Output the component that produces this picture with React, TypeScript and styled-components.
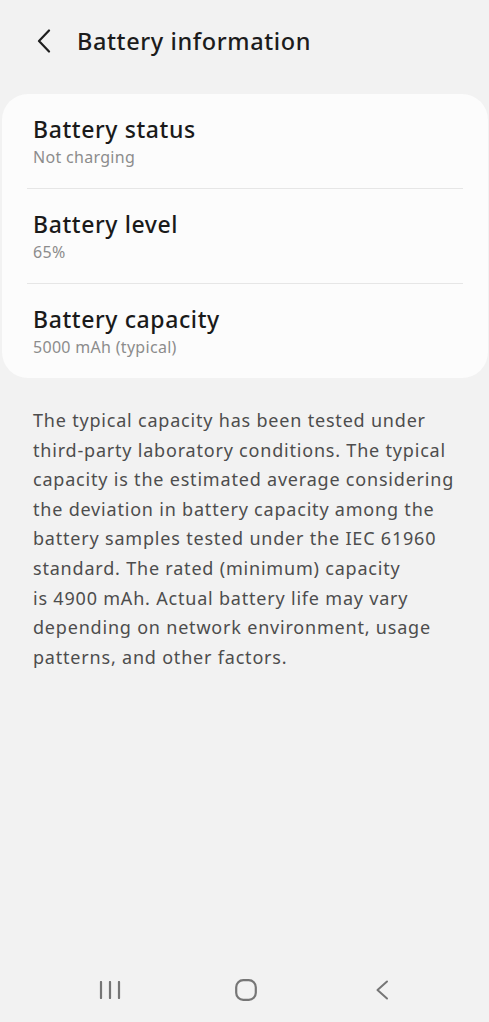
import React from "react";
import styled, { createGlobalStyle } from "styled-components";

const Global = createGlobalStyle`
  html, body { margin: 0; padding: 0; background: #f2f2f2; }
  body { font-family: "Noto Sans", "DejaVu Sans", sans-serif; -webkit-font-smoothing: antialiased; }
  * { box-sizing: border-box; }
`;

const Screen = styled.div`
  min-height: 100vh;
  height: 1022px;
  display: flex;
  flex-direction: column;
  background: #f2f2f2;
`;

const Header = styled.header`
  height: 94px;
  display: flex;
  align-items: flex-start;
  padding: 23px 0 0 30px;
`;

const BackButton = styled.button`
  width: 28px;
  height: 36px;
  border: 0;
  padding: 0;
  background: transparent;
  display: flex;
  align-items: center;
  justify-content: center;
  margin-right: 19px;
  color: #1f1f1f;
`;

const Title = styled.h1`
  margin: 0;
  font-size: 23.5px;
  line-height: 36px;
  font-weight: 500;
  color: #1c1c1c;
  letter-spacing: 0.6px;
`;

const Card = styled.section`
  margin: 0 1px 0 2px;
  background: #fcfcfc;
  border-radius: 26px;
  padding: 0 25px;
`;

const Item = styled.div<{ $last?: boolean }>`
  height: ${(p) => (p.$last ? 94 : 95)}px;
  padding: 18px 0 0 6px;
  border-bottom: ${(p) => (p.$last ? "none" : "1px solid #e6e6e6")};
`;

const ItemTitle = styled.div`
  font-size: 23px;
  line-height: 34px;
  color: #1a1a1a;
  font-weight: 500;
  letter-spacing: 0.6px;
`;

const ItemSub = styled.div`
  font-size: 16px;
  line-height: 22px;
  color: #8c8c8c;
  letter-spacing: 0.3px;
`;

const Note = styled.p`
  margin: 0;
  padding: 28px 10px 0 33px;
  font-size: 18px;
  line-height: 29.6px;
  color: #4d4d4d;
  letter-spacing: 0.8px;
  white-space: nowrap;
`;

const Spacer = styled.div`
  flex: 1;
`;

const NavBar = styled.nav`
  height: 64px;
  display: flex;
  align-items: flex-start;
  justify-content: center;
  padding: 18px 0 0 2px;
  gap: 96px;
`;

const NavIcon = styled.div`
  width: 40px;
  height: 28px;
  display: flex;
  align-items: center;
  justify-content: center;
  color: #767676;
`;

const lines = [
  "The typical capacity has been tested under",
  "third-party laboratory conditions. The typical",
  "capacity is the estimated average considering",
  "the deviation in battery capacity among the",
  "battery samples tested under the IEC 61960",
  "standard. The rated (minimum) capacity",
  "is 4900 mAh. Actual battery life may vary",
  "depending on network environment, usage",
  "patterns, and other factors.",
];

export default function App() {
  return (
    <>
      <Global />
      <Screen>
        <Header>
          <BackButton aria-label="Back">
            <svg width="16" height="24" viewBox="0 0 16 24" fill="none">
              <path d="M13 1.5 L3 12 L13 22.5" stroke="currentColor" strokeWidth="2.2" strokeLinecap="round" strokeLinejoin="round" />
            </svg>
          </BackButton>
          <Title>Battery information</Title>
        </Header>
        <Card>
          <Item>
            <ItemTitle>Battery status</ItemTitle>
            <ItemSub>Not charging</ItemSub>
          </Item>
          <Item>
            <ItemTitle>Battery level</ItemTitle>
            <ItemSub>65%</ItemSub>
          </Item>
          <Item $last>
            <ItemTitle>Battery capacity</ItemTitle>
            <ItemSub>5000 mAh (typical)</ItemSub>
          </Item>
        </Card>
        <Note>
          {lines.map((l, i) => (
            <React.Fragment key={i}>
              {l}
              {i < lines.length - 1 && <br />}
            </React.Fragment>
          ))}
        </Note>
        <Spacer />
        <NavBar>
          <NavIcon aria-label="Recent apps">
            <svg width="22" height="18" viewBox="0 0 22 18" fill="none">
              <path d="M2 1v16M11 1v16M20 1v16" stroke="currentColor" strokeWidth="2.2" strokeLinecap="round" />
            </svg>
          </NavIcon>
          <NavIcon aria-label="Home">
            <svg width="22" height="22" viewBox="0 0 22 22" fill="none">
              <rect x="1.2" y="1.2" width="19.6" height="19.6" rx="7" stroke="currentColor" strokeWidth="2.2" />
            </svg>
          </NavIcon>
          <NavIcon aria-label="Back">
            <svg width="14" height="20" viewBox="0 0 14 20" fill="none">
              <path d="M12 1.5 L2.5 10 L12 18.5" stroke="currentColor" strokeWidth="2" strokeLinecap="round" strokeLinejoin="round" />
            </svg>
          </NavIcon>
        </NavBar>
      </Screen>
    </>
  );
}
